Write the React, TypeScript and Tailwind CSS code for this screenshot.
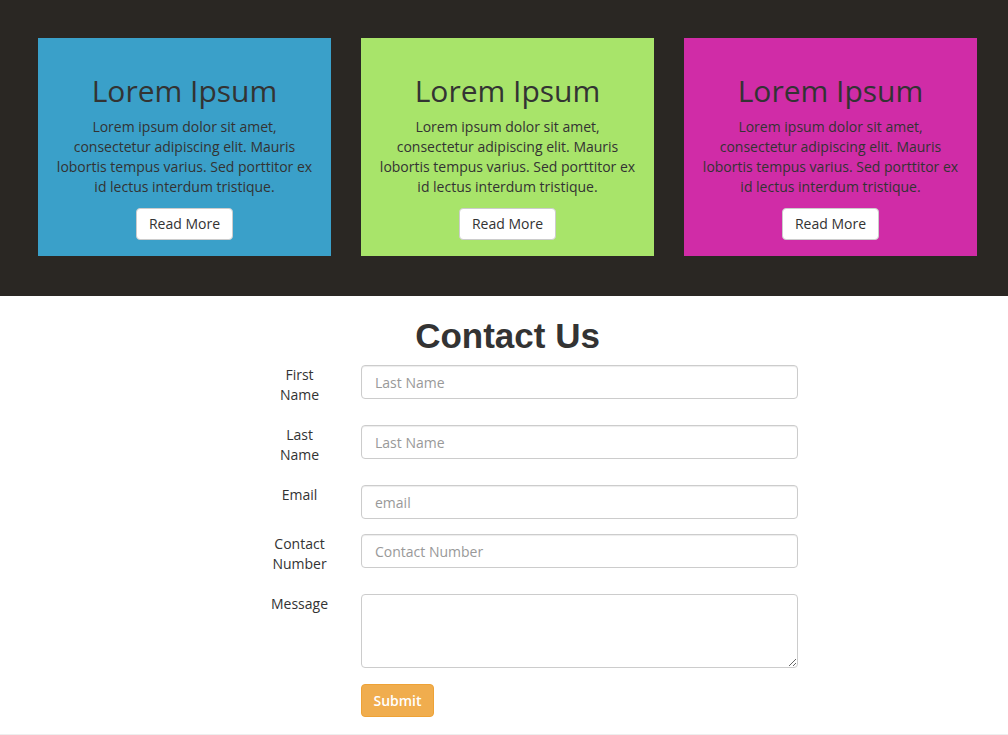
import React from "react";

const cards = [
  { bg: "bg-[#3aa0c9]" },
  { bg: "bg-[#a8e46a]" },
  { bg: "bg-[#d02ca7]" },
];

const rows: { label: string; placeholder: string; textarea?: boolean }[] = [
  { label: "First Name", placeholder: "Last Name" },
  { label: "Last Name", placeholder: "Last Name" },
  { label: "Email", placeholder: "email" },
  { label: "Contact Number", placeholder: "Contact Number" },
  { label: "Message", placeholder: "", textarea: true },
];

export default function App() {
  return (
    <div className="min-h-[735px] bg-white text-[#333] text-[14px] leading-[20px]" style={{ fontFamily: '"Open Sans", sans-serif' }}>
      <section className="bg-[#2a2723] pl-[38px] pr-[31px] pt-[38px] pb-[40px]">
        <div className="grid grid-cols-3 gap-[30px]">
          {cards.map((c, i) => (
            <div key={i} className={`${c.bg} px-[15px] pt-[36px] pb-[16px] text-center h-[218px]`}>
              <h2 className="text-[30px] leading-[33px] mb-[10px] text-[#333]">Lorem Ipsum</h2>
              <p className="mb-[11px] text-[#333]">
                Lorem ipsum dolor sit amet, consectetur adipiscing elit. Mauris lobortis tempus varius. Sed porttitor ex id lectus interdum tristique.
              </p>
              <button className="bg-white border border-[#ccc] rounded-[4px] h-[32px] px-[12px] text-[14px] text-[#333]">
                Read More
              </button>
            </div>
          ))}
        </div>
      </section>
      <section className="pb-[17px] border-b border-[#eee]">
        <h1
          className="text-center font-bold text-[35px] leading-[40px] mt-[20px] mb-[9px] pl-[7px] text-[#333]"
          style={{ fontFamily: '"Liberation Sans", Arial, sans-serif' }}
        >
          Contact Us
        </h1>
        <form className="ml-[252px] w-[560px]">
          {rows.map((r, i) => (
            <div key={i} className="flex items-start mb-[15px]">
              <label className="w-[95px] px-[15px] text-center mb-[5px]">
                <span className="block w-[65px]">{r.label}</span>
              </label>
              <div className="w-[465px] pl-[14px] pr-[14px]">
                {r.textarea ? (
                  <textarea
                    rows={3}
                    className="block w-[437px] h-[74px] border border-[#ccc] rounded-[4px] px-[12px] py-[6px] outline-none resize-y"
                  />
                ) : (
                  <input
                    placeholder={r.placeholder}
                    className="block w-[437px] h-[34px] border border-[#ccc] rounded-[4px] px-[13px] py-[6px] outline-none placeholder:text-[#999] shadow-[inset_0_1px_1px_rgba(0,0,0,0.075)]"
                  />
                )}
              </div>
            </div>
          ))}
          <div className="pl-[109px] -mt-[14px] pt-[15px]">
            <button
              type="button"
              className="bg-[#f0ad4e] border border-[#eea236] rounded-[4px] text-white h-[33px] w-[73px] text-[14px] font-semibold"
            >
              Submit
            </button>
          </div>
        </form>
      </section>
    </div>
  );
}
